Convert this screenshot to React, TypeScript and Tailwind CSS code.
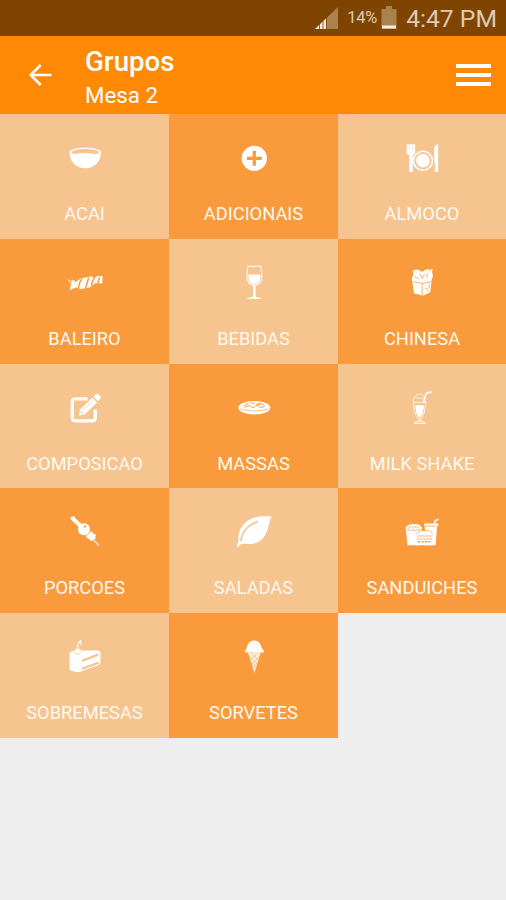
import type { ReactNode } from "react";
import clsx from "clsx";

type Group = {
  name: string;
  icon: ReactNode;
};

// Every icon is drawn on a 36x36 grid; "cut" shapes take the tile colour.
const cut = "var(--tile)";

const groups: Group[] = [
  {
    name: "ACAI",
    icon: (
      <>
        <path d="M2.5 12C2.5 21 8.500 28.300 18.200 28.300S34 21 34 12C34 9.600 27 7.700 18.200 7.700S2.500 9.600 2.500 12z" />
        <ellipse cx="18.2" cy="12.2" rx="13.8" ry="3.2" fill={cut} />
        <path d="M6.500 14.600c6-2 17.400-2 23.400 0-5 2-18.400 2-23.400 0z" />
      </>
    ),
  },
  {
    name: "ADICIONAIS",
    icon: (
      <>
        <circle cx="18.3" cy="18.3" r="12.6" />
        <path d="M18.300 10.800v15M10.800 18.300h15" stroke={cut} strokeWidth="3.2" />
      </>
    ),
  },
  {
    name: "ALMOCO",
    icon: (
      <>
        <path d="M2.700 4.300h8.400v8.200c0 1.400-.9 2.200-2.200 2.500v16.700H5.200V15c-1.500-.3-2.500-1.100-2.500-2.500z" />
        <path d="M5.300 4.300v5M8.400 4.300v5" stroke={cut} strokeWidth=".5" />
        <circle cx="19" cy="20.7" r="9.5" fill="none" stroke="currentColor" strokeWidth="1.6" />
        <circle cx="19" cy="20.7" r="6.9" />
        <path d="M34.200 4.300v27.400h-3.400v-10h-.6V9.800c0-3 1.600-5.500 4-5.500z" />
      </>
    ),
  },
  {
    name: "BALEIRO",
    icon: (
      <>
        <path d="M.8 14.300l3 1.600 3.200-.8 1.800 2.300c1.200-1.800 3-3.400 5.200-4l9-1.800c2-.2 3.400.5 4.200 1.800l3-2.100 5.400-.3-.3 7.200-2.400.4-5.300-.3c-1 2.300-3.400 3.800-6 4.400l-7.400 1.400c-2.200.2-3.800-.4-4.700-1.800L2.700 25l1.100-4.700z" />
        <path
          d="M4 16.500l-1.500 4M11.500 24.500c0-4 1.200-7.800 3.500-10.500M18 24.500c1.500-4 2.800-7.600 3.600-12M25 22.700c-.8-3.600.4-7 2.300-9.700M32.500 12.200l-1.800 6.800"
          fill="none"
          stroke={cut}
          strokeWidth="1.5"
        />
      </>
    ),
  },
  {
    name: "BEBIDAS",
    icon: (
      <>
        <path
          d="M12 1.400h12.800c1 7 1.700 10 .6 13.600-1 3-3.800 5.200-7 5.200s-6-2.200-7-5.200c-1.100-3.600-.4-6.600.6-13.600z"
          fill="none"
          stroke="currentColor"
          strokeWidth="1.2"
          strokeOpacity=".85"
        />
        <path d="M12.400 9.600h12c.4 5.700-1.500 9.400-6 9.400s-6.400-3.700-6-9.400z" />
        <path d="M17.200 20h2.400v11.600c.3.800 5.600.7 6.100 2.500H11c.5-1.800 5.900-1.700 6.200-2.500z" />
      </>
    ),
  },
  {
    name: "CHINESA",
    icon: (
      <>
        <path d="M7.700 13.500l1.500-3.700-.4-4 3-1.400 3.300.6 3.100 2 3-2.200 3.600-.8 1.900 1.700.6-2.100 1.200.4-.4 2.800.9 4.900-1.100 1.700-1.700 13.800-7.400 3.600L10 28.300z" />
        <path
          d="M8.600 16.500l9.600 2 9.600-2M18.200 19v12M10.500 11.500l4 2.500M15.800 8.500l2.400 5 2.300-4.200M23.800 8.500l-1.500 3.900M25.200 18.500v4.400M21.500 23.500c2-.6 3.600 1.200 1.300 3"
          fill="none"
          stroke={cut}
          strokeWidth=".8"
        />
      </>
    ),
  },
  {
    name: "COMPOSICAO",
    icon: (
      <>
        <path
          d="M20.500 8.900H8.300a3 3 0 0 0-3 3v16a3 3 0 0 0 3 3h17a3 3 0 0 0 3-3V19.500"
          fill="none"
          stroke="currentColor"
          strokeWidth="3.3"
        />
        <path d="M25.300 7.700l4.800 4.800L18 24.300l-6.200 1.200 1.400-6z" />
        <path d="M26.500 6.500l2-2.100c1-1 2-1 3 0l1.600 1.600c1 1 1 2 0 3l-2 2.200z" />
        <path d="M16 20l9.200-9.100" stroke={cut} strokeWidth=".6" />
        <circle cx="14.7" cy="22.5" r="1" fill={cut} />
      </>
    ),
  },
  {
    name: "MASSAS",
    icon: (
      <>
        <ellipse cx="18.3" cy="17.8" rx="16" ry="6.8" />
        <path
          d="M7.500 16.200c1.200-1.500 3-2.400 5-2.700M14.500 13.200c2-.4 4-.1 4.500.9M22 13.200c3 .3 5 1.200 6.500 2.700M8.500 17.700c2-.8 2.500-2 5-1.900 2.500.2 1.300 1.700 3.500 1.700 2.500 0 1.300-1.900 4-1.800 2.600.1 2 1.800 4.500 1.700 1.700-.1 1.700-.8 3-.8M20 13.800c1 1.100 3 .1 4.300 1.100"
          fill="none"
          stroke={cut}
          strokeWidth="1"
        />
        <path d="M4 19c7 2.500 21.500 2.500 28.500 0" fill="none" stroke={cut} strokeWidth=".6" />
      </>
    ),
  },
  {
    name: "MILK SHAKE",
    icon: (
      <>
        <path
          d="M9.500 12.500c-.3-5 2.200-8 5.900-8.500 3.700.5 5.700 3.500 5.900 8.500M9 12.500h13l-1.700 9.300c-.4 2.700-1.800 4.900-3.300 6.500v2.200M9 12.500l1.700 9.300c.4 2.700 1.800 4.900 3.300 6.500v2.200"
          fill="none"
          stroke="currentColor"
          strokeWidth="1"
          strokeOpacity=".8"
        />
        <path d="M11 15.200h9.200l-1.500 8.300-3.100 4.500-3.200-4.500z" />
        <path d="M19.400 12l2.300-7.300c.3-1 .9-1.500 1.800-1.800l4.500-1.200" fill="none" stroke="currentColor" strokeWidth="1.7" />
        <path
          d="M12 7.200c2 1.600 4.500 1.600 6.500.8M15.500 28v3M10 33.300c1.400-2.600 9.700-2.600 11.300 0z"
          fill="none"
          stroke="currentColor"
          strokeWidth=".9"
        />
      </>
    ),
  },
  {
    name: "PORCOES",
    icon: (
      <>
        <path d="M5 4l10 9" stroke="currentColor" strokeWidth="4" />
        <path d="M3 3.300l4-1 1.500 1.900-2.600 2.300z" />
        <circle cx="17" cy="15.2" r="6" />
        <circle cx="18" cy="12.6" r="1.2" fill={cut} />
        <path d="M19.200 21.300l2.600-1.300 2.300-3 1.500 2 3.300 1.700-.7 2 .5 2-2.200.7-2.200 2-1.700-2-3-1.600z" />
        <path d="M24.500 24l7.500 7.500" stroke="currentColor" strokeWidth="1.2" strokeOpacity=".8" />
      </>
    ),
  },
  {
    name: "SALADAS",
    icon: (
      <>
        <path d="M35.700 2.400C33.600 5.600 33.500 9.800 31.800 15c-2.300 8-8.500 15-17 15.100-4.200.2-7.500-1.300-10.300.2-1 .7-1.500 1.700-2.300 2.800L.8 32c.1-1.700.7-3.200 1.700-4.500C1.600 18.700 5 11 12 6.400 18.500 2.100 27 2 35.700 2.400z" />
        <path d="M4.800 27C6 18 12 10.500 22 7.800" fill="none" stroke={cut} strokeWidth="1.7" />
      </>
    ),
  },
  {
    name: "SANDUICHES",
    icon: (
      <>
        <path d="M1.700 14c1-3 4-4 8-4 4.500 0 7.700 1.300 8.300 4.500L15.500 31.300H3.500z" />
        <path d="M20.200 9.600h6l3.100.2L30.800 6l3.400-1.400.6 1.300-2.800 1.400-1 2.300h3.200v2.300h-1.100l-1.500 19.400H22l-1.300-19.400h-.7z" />
        <path d="M12.600 21.500c0-3.200 3.500-4.700 8-4.700s8 1.500 8 4.700v9.800h-16z" />
        <path
          d="M4.200 14.500l3-2.300 2.200 2.100 3-1.900 3.500 2M3 15.500c4 1 9 1 13.300 0M21.300 12.100h11.400M12.700 22h15.900M13 25h15.500M12.900 20c1-2.700 4-3.700 7.700-3.700 4 0 7 1.200 8 3.700"
          fill="none"
          stroke={cut}
          strokeWidth=".7"
        />
        <path d="M14 27.800h13.500" stroke={cut} strokeWidth="1.4" strokeDasharray="2.2 1.2" />
      </>
    ),
  },
  {
    name: "SOBREMESAS",
    icon: (
      <>
        <path d="M2.600 14.200c1-2 2.600-2.400 4.500-2.300 1.500-3 5-3.400 7-.3l16-.1c2.200 0 3.300.7 3.400 2.500v11.200L16 31.700c-4.300 1.900-10.600 1.700-13.400-1.200z" />
        <path d="M15 20.500l16.200-6v2.500L15 23.100zM15 28.600l16.800-6.200v2.400L15 31z" fill={cut} />
        <path d="M10.800 9.800c-.7-3 .2-5.600 2.700-8l.7 4" fill="none" stroke="currentColor" strokeWidth="1.2" />
        <path d="M7 11.500c-.5 4.500 6.800 5.200 7.200.7" fill="none" stroke={cut} strokeWidth=".7" />
      </>
    ),
  },
  {
    name: "SORVETES",
    icon: (
      <>
        <path d="M9.300 13.600C8.800 11.700 9.600 10.400 10.700 9.400c.5-4.600 3.600-7.900 7.500-7.900s7 3.300 7.600 7.900c1.600 1 2.300 2.400 1.800 4.200z" />
        <path d="M12 13.500h12.700L18.400 34z" fillOpacity=".85" />
        <path
          d="M14.300 21.200l7-7M15.800 25.300l7.500-8M16.900 29l5.300-6.200M22.300 21.200l-7-7M21 25.300l-7.500-8M19.800 29l-5.100-6.200"
          stroke={cut}
          strokeWidth=".5"
        />
      </>
    ),
  },
];

function StatusBar() {
  return (
    <div className="flex h-9 items-center justify-end bg-[#7f4500] pr-[9px] text-[#ddcbb6]">
      <svg className="h-[22px] w-[24px]" viewBox="0 0 24 22">
        <path d="M24 0v22H1z" fill="#aa8250" />
        <path d="M1 22L12 11.500V22z" fill="#f0e6da" />
        <path d="M5.500 17v5M9 14v8M12.500 10v12" stroke="#7f4500" strokeWidth=".8" />
      </svg>
      <span className="ml-[9px] w-[32px] pt-px text-[16.5px] tracking-[-0.2px] whitespace-nowrap">14%</span>
      <svg className="ml-[2px] h-[24px] w-[16px]" viewBox="0 0 16 24">
        <path d="M5 0h6v3h4.500v20H.5V3H5z" fill="#aa8250" />
        <path d="M1 19.500h14V22.500H1z" fill="#f6ece0" />
      </svg>
      <span className="ml-[9px] pt-[2px] text-[24.7px] leading-none whitespace-nowrap">4:47 PM</span>
    </div>
  );
}

function Header() {
  return (
    <header className="flex h-[78px] items-center bg-[#ff8905] pr-[15px] pl-[28px] text-white">
      <button type="button" aria-label="Voltar">
        <svg className="h-6 w-6" viewBox="0 0 24 24" fill="none" stroke="currentColor" strokeWidth="2.6">
          <path d="M23.500 12H2.500M12.700 2L2.700 12l10 10" />
        </svg>
      </button>
      <div className="ml-[33px] flex-1 pt-[6px]">
        <h1 className="text-[27.7px] leading-[34px] font-medium">Grupos</h1>
        <p className="text-[22.3px] leading-[32px]">Mesa 2</p>
      </div>
      <button type="button" aria-label="Menu" className="flex w-[35px] flex-col gap-[5px]">
        <span className="h-[4px] bg-white" />
        <span className="h-[4px] bg-white" />
        <span className="h-[4px] bg-white" />
      </button>
    </header>
  );
}

function GroupTile({ group, dark }: { group: Group; dark: boolean }) {
  return (
    <button
      type="button"
      className={clsx(
        "flex flex-col items-center pt-[26px] text-white",
        dark ? "bg-[#f99b3c] [--tile:#f99b3c]" : "bg-[#f6c48f] [--tile:#f6c48f]"
      )}
    >
      <svg className="h-9 w-9" viewBox="0 0 36 36" fill="currentColor">
        {group.icon}
      </svg>
      <span className="mt-[27px] text-[18.3px] leading-[21px] whitespace-nowrap text-[#fff8ef]">{group.name}</span>
    </button>
  );
}

export default function App() {
  return (
    <div className="h-[900px] w-[506px] overflow-hidden bg-[#eeeeee] font-['Roboto',sans-serif]">
      <StatusBar />
      <Header />
      <main className="grid auto-rows-[124.8px] grid-cols-[169px_169px_168px]">
        {groups.map((group, i) => (
          <GroupTile key={group.name} group={group} dark={i % 2 === 1} />
        ))}
      </main>
    </div>
  );
}
